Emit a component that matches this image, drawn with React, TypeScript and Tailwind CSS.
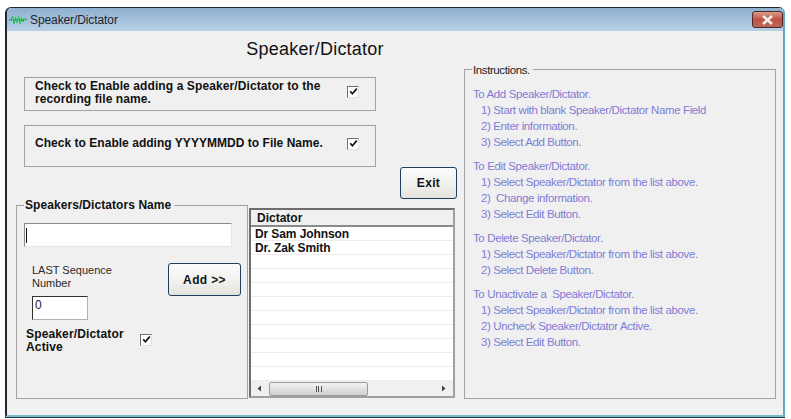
import React from "react";

const font = { fontFamily: '"Liberation Sans", Arial, sans-serif' };

function Check() {
  return (
    <span className="w-[12px] h-[12px] bg-white border border-t-[#707070] border-l-[#707070] border-b-[#e0e0e0] border-r-[#e0e0e0] flex items-center justify-center shrink-0">
      <svg width="9" height="9" viewBox="0 0 9 9">
        <path d="M1.2 4.2 L3.4 6.8 L7.8 1.6" fill="none" stroke="#111" strokeWidth="1.7" />
      </svg>
    </span>
  );
}

const blocks: { head: string; lines: string[] }[] = [
  { head: "To Add Speaker/Dictator.", lines: ["1) Start with blank Speaker/Dictator Name Field", "2) Enter information.", "3) Select Add Button."] },
  { head: "To Edit Speaker/Dictator.", lines: ["1) Select Speaker/Dictator from the list above.", "2)  Change information.", "3) Select Edit Button."] },
  { head: "To Delete Speaker/Dictator.", lines: ["1) Select Speaker/Dictator from the list above.", "2) Select Delete Button."] },
  { head: "To Unactivate a  Speaker/Dictator.", lines: ["1) Select Speaker/Dictator from the list above.", "2) Uncheck Speaker/Dictator Active.", "3) Select Edit Button."] },
];

function GroupBox({ label, className, labelClass, children }: { label: string; className: string; labelClass: string; children: React.ReactNode }) {
  return (
    <div className={"relative border border-[#a3a3a3] " + className}>
      <span className={"absolute left-[7px] top-[-8px] bg-[#f0f0f0] px-[1px] pr-[3px] leading-[14px] whitespace-nowrap " + labelClass}>{label}</span>
      {children}
    </div>
  );
}

function Btn({ label, className }: { label: string; className: string }) {
  return (
    <button className={"rounded-[3px] border border-[#1d3f5e] bg-gradient-to-b from-[#fbfbfb] via-[#f2f2f0] to-[#e4e2dc] text-[12px] font-bold text-[#151515] tracking-[0.35px] " + className}>
      {label}
    </button>
  );
}

export default function App() {
  return (
    <div className="w-[791px] h-[419px] bg-white overflow-hidden pl-[5px] pt-[7px]" style={font}>
      <div className="w-[780px] h-[410px] rounded-t-[6px] border-l-2 border-t border-b-2 border-r-2 border-l-[#1c2a33] border-t-[#1c2a33] border-b-[#7fb8c8] border-r-[#5fa9bf] bg-[#f0f0f0] flex flex-col">
        <div className="h-[23px] shrink-0 bg-gradient-to-b from-[#8fb0d0] to-[#b9d1e8] flex items-center pl-[2px] rounded-t-[5px]">
          <svg width="18" height="10" viewBox="0 0 18 10" className="shrink-0">
            <path d="M0 5 H2 L3.5 1 L5 9 L6.5 2 L8 8 L9.5 1 L11 9 L12.5 2 L14 7 L15 4 H18" fill="none" stroke="#22c850" strokeWidth="1" />
            <path d="M0 5 H18" stroke="#111" strokeWidth="0.6" strokeDasharray="1 1" />
          </svg>
          <span className="ml-[3px] pt-[1px] text-[12px] text-[#1b2530] tracking-[-0.1px]">Speaker/Dictator</span>
          <div className="ml-auto w-[31px] h-[17px] rounded-[3px] border border-[#4d2a28] bg-gradient-to-b from-[#d99b8e] via-[#c2503f] to-[#b56a5c] flex items-center justify-center">
            <svg width="13" height="10" viewBox="0 0 13 10">
              <path d="M2 1 L11 9 M11 1 L2 9" stroke="#f4f0ee" strokeWidth="2.6" />
            </svg>
          </div>
        </div>

        <div className="flex-1 flex pl-[9px]">
          <div className="w-[441px] shrink-0 flex flex-col">
            <div className="h-[38px] shrink-0 flex items-center justify-center pl-[157px] pb-[2px] text-[18px] tracking-[0.2px] text-[#111] whitespace-nowrap">Speaker/Dictator</div>
            <div className="mt-[8px] ml-[8px] w-[352px] h-[34px] border border-[#a3a3a3] flex items-center pl-[10px] pr-[16px] justify-between">
              <span className="w-[300px] text-[12px] font-bold leading-[13px] text-[#111] tracking-[0.1px] pb-[3px]">Check to Enable adding a Speaker/Dictator to the recording file name.</span>
              <span className="pb-[5px]"><Check /></span>
            </div>
            <div className="mt-[14px] ml-[8px] w-[352px] h-[42px] border border-[#a3a3a3] flex items-center pl-[10px] pr-[16px] justify-between">
              <span className="text-[12px] font-bold text-[#111] tracking-[0.03px] whitespace-nowrap pb-[6px]">Check to Enable adding YYYYMMDD to File Name.</span>
              <span className="pb-[5px]"><Check /></span>
            </div>
            <div className="h-[32px] shrink-0 flex justify-end">
              <Btn label="Exit" className="w-[57px] h-[32px]" />
            </div>
            <div className="mt-[9px] flex items-start">
              <GroupBox label="Speakers/Dictators Name" labelClass="text-[12px] font-bold text-[#111] tracking-[0.07px]" className="w-[232px] h-[194px] mt-[-3px] flex flex-col pl-[7px]">
                <div className="mt-[17px] w-[208px] h-[24px] bg-white border border-t-[#8a8a8a] border-l-[#8a8a8a] border-r-[#e6e6e6] border-b-[#e6e6e6] flex items-center pl-[1px]">
                  <span className="w-[1px] h-[15px] bg-[#111]" />
                </div>
                <div className="flex">
                  <div className="w-[144px]">
                    <div className="mt-[17px] ml-[8px] text-[11px] leading-[13px] text-[#2a2a2a]">LAST Sequence<br />Number</div>
                    <div className="mt-[6px] ml-[8px] w-[56px] h-[24px] bg-white border border-t-[#333] border-l-[#333] border-r-[#b0b0b0] border-b-[#b0b0b0] text-[12px] leading-[17px] pl-[2px] text-[#222]">0</div>
                  </div>
                  <Btn label="Add >>" className="mt-[16px] w-[73px] h-[33px]" />
                </div>
                <div className="mt-[8px] ml-[2px] flex items-center">
                  <span className="w-[114px] text-[12px] font-bold leading-[13px] text-[#111] tracking-[0.15px]">Speaker/Dictator<br />Active</span>
                  <span className="pb-[3px]"><Check /></span>
                </div>
              </GroupBox>
              <div className="ml-[1px] w-[206px] h-[190px] border-2 border-t-[#6e6e6e] border-l-[#6e6e6e] border-r-[#a0a0a0] border-b-[#a0a0a0] bg-white flex flex-col">
                <div className="h-[17px] shrink-0 bg-[#f0f0f0] border-b-2 border-b-[#8a8a8a] pl-[6px] text-[12px] font-bold leading-[17px] text-[#111]">Dictator</div>
                <div className="flex-1 flex flex-col">
                  {["Dr Sam Johnson", "Dr. Zak Smith", "", "", "", "", "", "", "", "", ""].map((t, i) => (
                    <div key={i} className="h-[14px] shrink-0 pl-[4px] border-b border-[#ececec] text-[12px] font-bold leading-[14px] text-[#111] tracking-[-0.1px]">{t}</div>
                  ))}
                </div>
                <div className="h-[15px] shrink-0 bg-[#f0f0f0] flex items-center">
                  <svg width="18" height="15" viewBox="0 0 18 15" className="shrink-0"><path d="M10 4.5 V10.5 L6.5 7.5 Z" fill="#444" /></svg>
                  <div className="w-[99px] h-[14px] rounded-[2px] border border-[#9a9a9a] bg-gradient-to-b from-[#f4f4f4] to-[#cfcfcf] flex items-center justify-center gap-[1px]">
                    <span className="w-[1px] h-[6px] bg-[#555]" /><span className="w-[1px] h-[6px] bg-[#555]" /><span className="ml-[1px] w-[1px] h-[6px] bg-[#555]" />
                  </div>
                  <svg width="17" height="15" viewBox="0 0 17 15" className="ml-auto mr-[1px] shrink-0"><path d="M7 4.5 V10.5 L10.5 7.5 Z" fill="#444" /></svg>
                </div>
              </div>
            </div>
          </div>
          <GroupBox label="Instructions." labelClass="text-[11.5px] text-[#1a1a1a] tracking-[-0.4px] mt-[1px]" className="mt-[38px] ml-[7px] w-[312px] h-[330px] pl-[8px] pt-[16px]">
            {blocks.map((b) => (
              <div key={b.head} className="mb-[8px] text-[11.5px] leading-[16px] text-[#7f7cd6] tracking-[-0.38px] whitespace-pre">
                <div>{b.head}</div>
                {b.lines.map((l) => <div key={l} className="pl-[8px]">{l}</div>)}
              </div>
            ))}
          </GroupBox>
        </div>
      </div>
      <div className="w-[780px] h-[1px] bg-[#1c3a44]" />
    </div>
  );
}
